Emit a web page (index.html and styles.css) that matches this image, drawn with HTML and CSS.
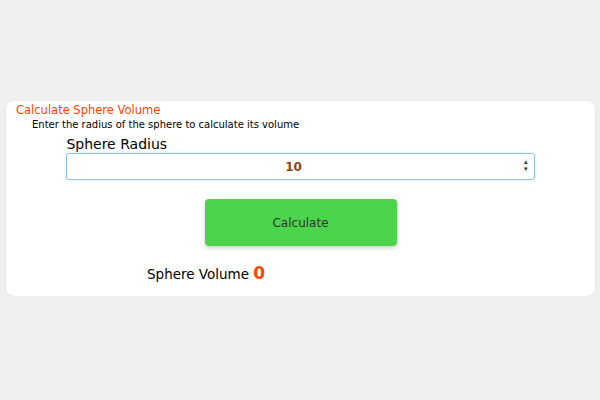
FILE: index.html
```html
<!DOCTYPE html>
<html lang="en">
<head>
    <meta charset="UTF-8">
    <meta name="viewport" content="width=device-width, initial-scale=1.0">
    <title>Sphere Volume</title>
    <link rel="stylesheet" href="styles.css">
</head>
<body>
    <div class="card">
        <h3 class="title">Calculate Sphere Volume</h3>
        <p class="subtitle">Enter the radius of the sphere to calculate its volume</p>
        <div class="field">
            <label for="radius">Sphere Radius</label>
            <div class="input-wrap">
                <input type="number" id="radius" value="10">
                <span class="spin">&#9652;<br>&#9662;</span>
            </div>
        </div>
        <div class="actions">
            <button type="button">Calculate</button>
        </div>
        <p class="result">Sphere Volume <span class="value">0</span></p>
    </div>
</body>
</html>
```

FILE: styles.css
```css
body {
    font-family: "Comic Sans MS", "DejaVu Sans", sans-serif;
    margin: 0;
    padding: 0;
    background-color: #f0f0f0;
    color: #000;
}
.card {
    margin: 101px 5px 0 6px;
    padding: 1px 0 13px 0;
    background-color: #fff;
    border-radius: 8px;
    box-shadow: 0 1px 4px rgba(0, 0, 0, 0.06);
}
.title {
    margin: 0 0 0 10px;
    font-size: 11.5px;
    font-weight: normal;
    color: #ff4500;
    line-height: 16px;
}
.subtitle {
    margin: 0 0 0 26px;
    font-size: 10px;
    line-height: 14px;
}
.field {
    width: 79.5%;
    margin: 4px auto 0;
}
.field label {
    display: block;
    font-size: 14px;
    line-height: 17px;
}
.input-wrap {
    position: relative;
}
.field input {
    display: block;
    width: 100%;
    box-sizing: border-box;
    height: 27px;
    padding: 0 20px 0 6px;
    border: 1px solid #8fc1ea;
    border-radius: 3px;
    box-shadow: 0 0 3px #cfe6f8;
    font-family: inherit;
    font-size: 12px;
    font-weight: bold;
    color: #8b4513;
    text-align: center;
    outline: none;
    -moz-appearance: textfield;
}
.field input::-webkit-inner-spin-button,
.field input::-webkit-outer-spin-button {
    -webkit-appearance: none;
    margin: 0;
}
.spin {
    position: absolute;
    right: 6px;
    top: 6px;
    font-family: "DejaVu Sans", sans-serif;
    font-size: 7px;
    line-height: 7px;
    color: #333;
    background-color: #f3f3f3;
    padding: 0 1px;
}
.actions {
    display: flex;
    justify-content: center;
    margin-top: 19px;
}
button {
    width: 192px;
    height: 47px;
    border: none;
    border-radius: 4px;
    background-color: #4cd44c;
    color: #333;
    font-family: inherit;
    font-size: 12px;
    box-shadow: 0 2px 4px rgba(0, 0, 0, 0.2);
    cursor: pointer;
}
.result {
    margin: 17px 0 0 141px;
    font-size: 13.5px;
}
.result .value {
    color: #ff4500;
    font-size: 17px;
    font-weight: bold;
}
```
